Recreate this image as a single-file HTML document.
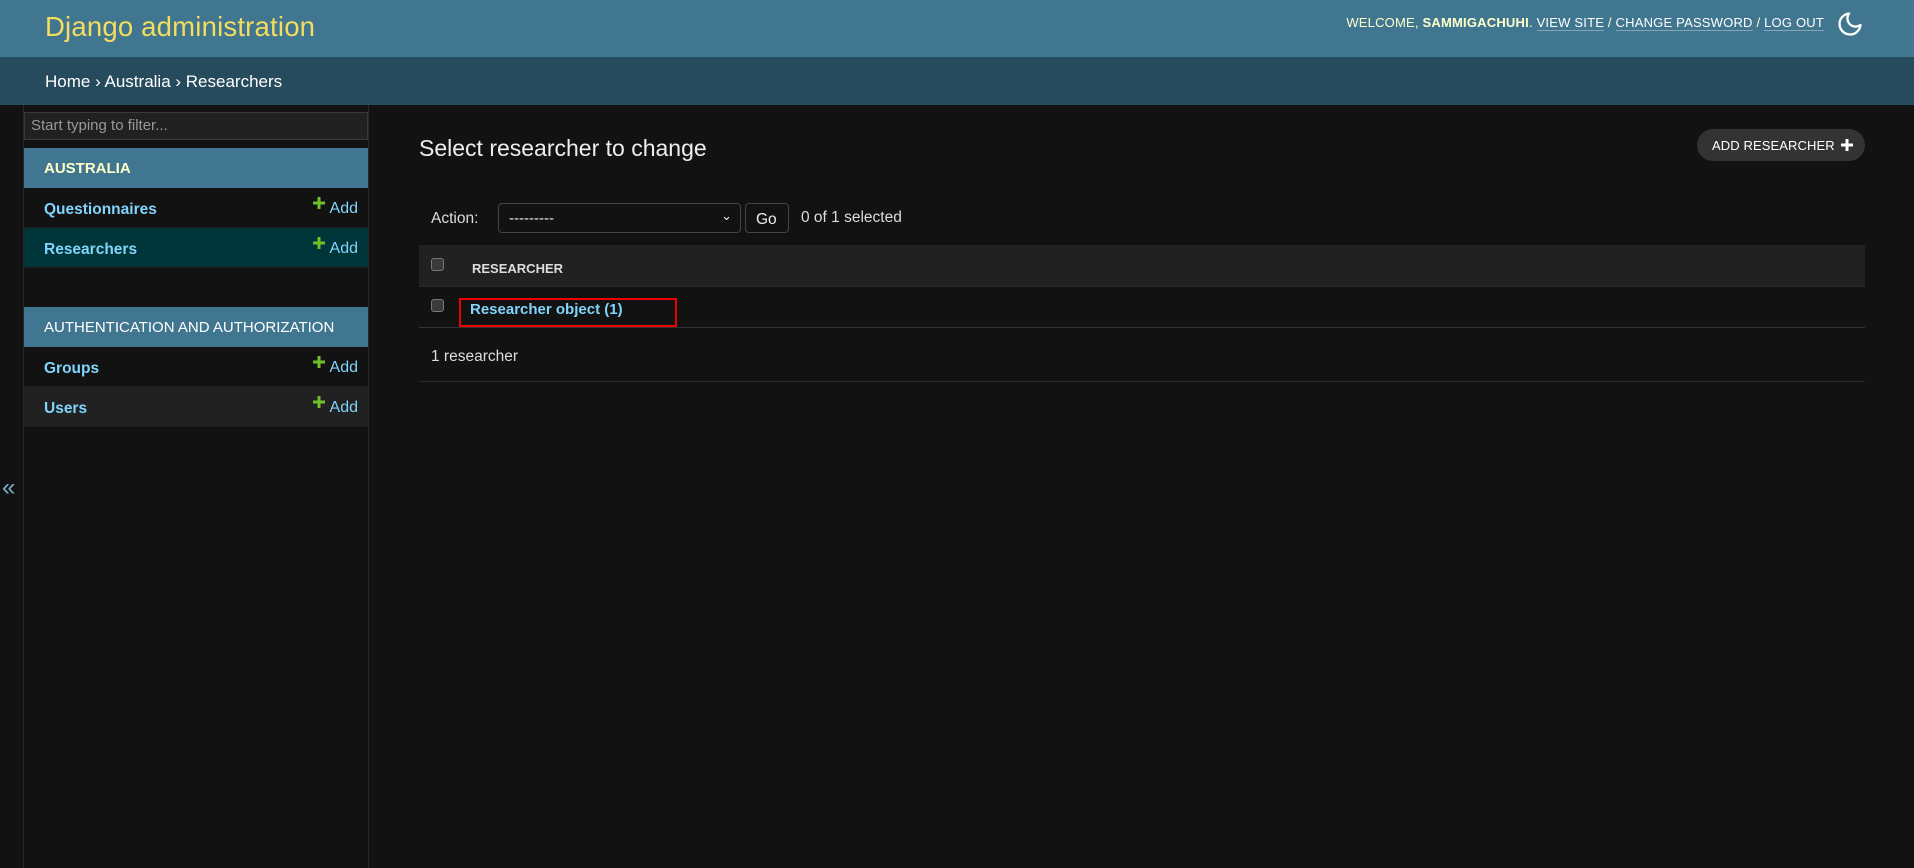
<!DOCTYPE html>
<html><head><meta charset="utf-8"><style>
*{box-sizing:border-box;margin:0;padding:0}
body{width:1914px;height:868px;overflow:hidden;background:#121212;font-family:"Liberation Sans",sans-serif;color:#eee;position:relative}
.abs{position:absolute}
#hdr{left:0;top:0;width:1914px;height:57px;background:#417690}
#brand{left:45px;top:11px;font-size:27.5px;color:#f5dd5d;font-weight:300;letter-spacing:0.2px}
#tools{right:90px;top:15px;font-size:13px;color:#ffc;letter-spacing:0.2px}
#tools a{color:#fff;text-decoration:none;border-bottom:1px solid rgba(255,255,255,.35)}
#tools b{color:#ffc}
#bc{left:0;top:57px;width:1914px;height:48px;background:#264b5d;padding:15px 45px;font-size:17px;color:#fff}
#side{left:23px;top:105px;width:346px;height:763px;border-left:1px solid #2a2a2a;border-right:1px solid #2a2a2a}
.filter{left:24px;top:112px;width:344px;height:28px;background:#212121;border:1px solid #3a3a3a;color:#999;font-size:15px;padding:4px 6px}
.cap{left:24px;width:344px;height:40px;background:#417690;color:#fff;font-size:15px;padding:12px 20px}
.row{left:24px;width:344px;height:40px;border-bottom:1px solid #1e1e1e;font-size:15.5px;font-weight:bold;color:#81d4fa;padding:13px 20px}
.row .add{position:absolute;right:10px;top:12px;font-weight:normal;color:#81d4fa;font-size:16px}
.row .add svg{position:relative;top:-4px;margin-right:5px}
h1{position:absolute;left:419px;top:135px;font-size:23px;font-weight:300;color:#eee}
#addbtn{left:1697px;top:129px;width:168px;height:32px;border-radius:16px;background:#333;color:#fff;font-size:13px;padding:9px 15px;letter-spacing:.1px}
.cb{width:13px;height:13px;border:1px solid #777;border-radius:3px;background:#3a3a3a}
</style></head><body>
<div id="hdr" class="abs"></div>
<div id="brand" class="abs">Django administration</div>
<div id="tools" class="abs">WELCOME, <b>SAMMIGACHUHI</b>. <a>VIEW SITE</a> / <a>CHANGE PASSWORD</a> / <a>LOG OUT</a></div>
<svg class="abs" style="left:1836px;top:10px" width="28" height="28" viewBox="0 0 24 24"><path d="M21 12.8A9 9 0 1 1 11.2 3a7 7 0 0 0 9.8 9.8z" fill="none" stroke="#fff" stroke-width="2" stroke-linejoin="round"/></svg>
<div id="bc" class="abs">Home › Australia › Researchers</div>
<div id="side" class="abs"></div>
<div class="abs filter">Start typing to filter...</div>
<div class="abs cap" style="top:148px;font-weight:bold;color:#ffc">AUSTRALIA</div>
<div class="abs row" style="top:188px">Questionnaires<span class="add"><svg width="12" height="12" viewBox="0 0 12 12"><path d="M6 0v12M0 6h12" stroke="#70bf2b" stroke-width="3"/></svg>Add</span></div>
<div class="abs row" style="top:228px;background:#00363a">Researchers<span class="add"><svg width="12" height="12" viewBox="0 0 12 12"><path d="M6 0v12M0 6h12" stroke="#70bf2b" stroke-width="3"/></svg>Add</span></div>
<div class="abs cap" style="top:307px">AUTHENTICATION AND AUTHORIZATION</div>
<div class="abs row" style="top:347px">Groups<span class="add"><svg width="12" height="12" viewBox="0 0 12 12"><path d="M6 0v12M0 6h12" stroke="#70bf2b" stroke-width="3"/></svg>Add</span></div>
<div class="abs row" style="top:387px;background:#212121">Users<span class="add"><svg width="12" height="12" viewBox="0 0 12 12"><path d="M6 0v12M0 6h12" stroke="#70bf2b" stroke-width="3"/></svg>Add</span></div>
<div class="abs" style="left:2px;top:474px;color:#79aec8;font-size:24px">«</div>
<h1>Select researcher to change</h1>
<div id="addbtn" class="abs">ADD RESEARCHER <svg style="position:absolute;right:12px;top:10px" width="12" height="12" viewBox="0 0 12 12"><path d="M6 0v12M0 6h12" stroke="#fff" stroke-width="3"/></svg></div>
<div class="abs" style="left:431px;top:210px;font-size:15.5px;color:#ddd">Action:</div>
<div class="abs" style="left:498px;top:203px;width:243px;height:30px;border:1px solid #444;border-radius:4px;background:#121212;font-size:15px;padding:6px 10px;color:#eee">---------<span style="position:absolute;right:8px;top:4px;font-size:13px">&#8964;</span></div>
<div class="abs" style="left:745px;top:203px;width:44px;height:30px;border:1px solid #444;border-radius:4px;font-size:15.5px;padding:7px 10px">Go</div>
<div class="abs" style="left:801px;top:209px;font-size:15.5px;color:#ddd">0 of 1 selected</div>
<div class="abs" style="left:419px;top:245px;width:1446px;height:42px;background:#212121;border-bottom:1px solid #2a2a2a"></div>
<div class="abs cb" style="left:431px;top:258px"></div>
<div class="abs" style="left:472px;top:261px;font-size:13px;font-weight:bold;color:#ddd">RESEARCHER</div>
<div class="abs cb" style="left:431px;top:299px"></div>
<div class="abs" style="left:470px;top:301px;font-size:15px;font-weight:bold;color:#81d4fa">Researcher object (1)</div>
<div class="abs" style="left:459px;top:298px;width:218px;height:29px;border:2px solid #e00"></div>
<div class="abs" style="left:419px;top:327px;width:1446px;height:1px;background:#333"></div>
<div class="abs" style="left:431px;top:348px;font-size:15.5px;color:#ddd">1 researcher</div>
<div class="abs" style="left:419px;top:381px;width:1446px;height:1px;background:#2a2a2a"></div>
</body></html>
